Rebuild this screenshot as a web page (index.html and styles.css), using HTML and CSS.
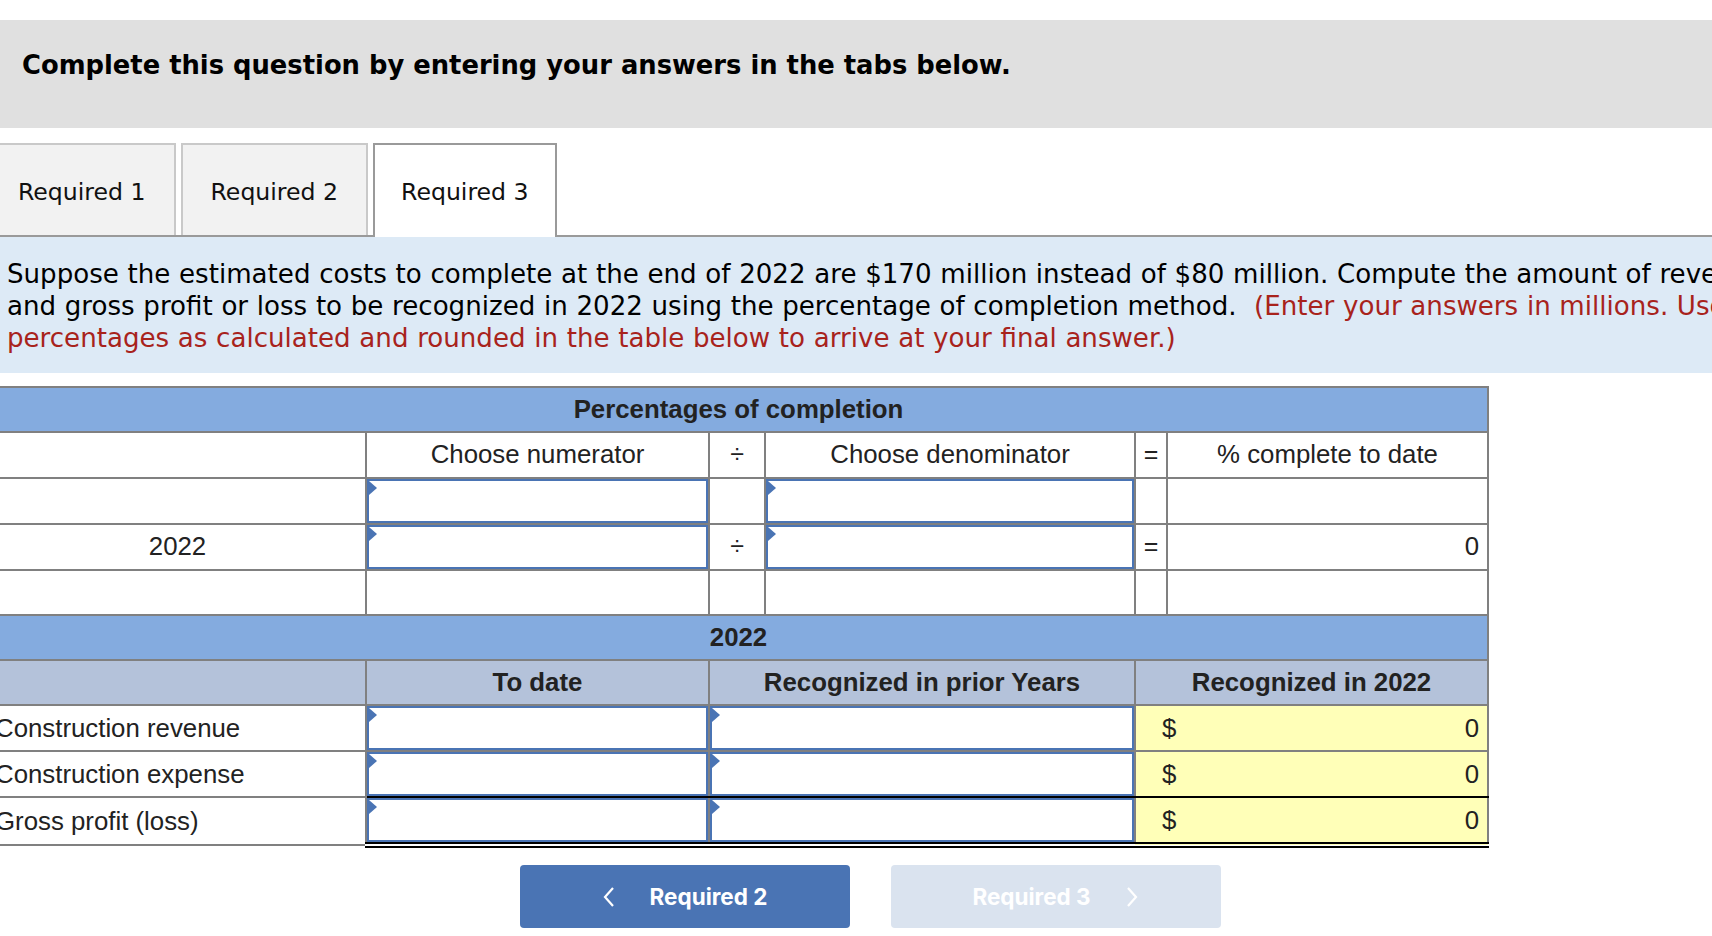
FILE: index.html
```html
<!DOCTYPE html>
<html>
<head>
<meta charset="utf-8">
<link rel="stylesheet" href="styles.css">
</head>
<body>
<div class="page">
  <div class="banner">Complete this question by entering your answers in the tabs below.</div>

  <div class="tabs">
    <div class="tab">Required 1</div>
    <div class="tab">Required 2</div>
    <div class="tab active">Required 3</div>
  </div>

  <div class="desc">
    Suppose the estimated costs to complete at the end of 2022 are $170 million instead of $80 million. Compute the amount of revenue<br>
    and gross profit or loss to be recognized in 2022 using the percentage of completion method. <span class="note">&nbsp;(Enter your answers in millions. Use the</span><br>
    <span class="note">percentages as calculated and rounded in the table below to arrive at your final answer.)</span>
  </div>

  <table class="grid">
    <colgroup>
      <col class="c1"><col class="c2"><col class="c3"><col class="c4"><col class="c5"><col class="c6">
    </colgroup>
    <tr class="head">
      <td colspan="6">Percentages of completion</td>
    </tr>
    <tr>
      <td></td>
      <td class="center">Choose numerator</td>
      <td class="center op">÷</td>
      <td class="center">Choose denominator</td>
      <td class="center op">=</td>
      <td class="center">% complete to date</td>
    </tr>
    <tr>
      <td></td>
      <td class="inp"><div class="field"></div></td>
      <td></td>
      <td class="inp"><div class="field"></div></td>
      <td></td>
      <td></td>
    </tr>
    <tr>
      <td class="center">2022</td>
      <td class="inp"><div class="field"></div></td>
      <td class="center op">÷</td>
      <td class="inp"><div class="field"></div></td>
      <td class="center op">=</td>
      <td class="num">0</td>
    </tr>
    <tr>
      <td></td><td></td><td></td><td></td><td></td><td></td>
    </tr>
    <tr class="head">
      <td colspan="6">2022</td>
    </tr>
    <tr class="sub">
      <td></td>
      <td>To date</td>
      <td colspan="2">Recognized in prior Years</td>
      <td colspan="2">Recognized in 2022</td>
    </tr>
    <tr>
      <td class="label">Construction revenue</td>
      <td class="inp"><div class="field"></div></td>
      <td class="inp" colspan="2"><div class="field"></div></td>
      <td class="yel" colspan="2"><div class="money"><span>$</span><span>0</span></div></td>
    </tr>
    <tr class="sumrow">
      <td class="label">Construction expense</td>
      <td class="inp"><div class="field"></div></td>
      <td class="inp" colspan="2"><div class="field"></div></td>
      <td class="yel" colspan="2"><div class="money"><span>$</span><span>0</span></div></td>
    </tr>
    <tr class="total">
      <td class="label">Gross profit (loss)</td>
      <td class="inp"><div class="field"></div></td>
      <td class="inp" colspan="2"><div class="field"></div></td>
      <td class="yel" colspan="2"><div class="money"><span>$</span><span>0</span></div></td>
    </tr>
  </table>

  <div class="nav">
    <button class="btn prev">
      <svg width="14" height="20" viewBox="0 0 14 20"><polyline points="11,1 3,10 11,19" fill="none" stroke="#fff" stroke-width="2.2"/></svg>
      <span>Required 2</span>
    </button>
    <button class="btn next">
      <span>Required 3</span>
      <svg width="14" height="20" viewBox="0 0 14 20"><polyline points="3,1 11,10 3,19" fill="none" stroke="#fff" stroke-width="2.2"/></svg>
    </button>
  </div>
</div>
</body>
</html>
```

FILE: styles.css
```css
html, body {
  margin: 0;
  padding: 0;
  background: #fff;
}
body {
  width: 1712px;
  height: 936px;
  overflow: hidden;
}
.page {
  margin-left: -12px;
  width: 1764px;
  padding-top: 20px;
}
.banner {
  background: #e0e0e0;
  height: 108px;
  box-sizing: border-box;
  padding: 29px 0 0 34px;
  font-family: "DejaVu Sans", Verdana, sans-serif;
  font-weight: bold;
  font-size: 25.8px;
  line-height: 32px;
  color: #000;
  width: 1800px;
}
.tabs {
  margin-top: 15px;
  display: flex;
  gap: 5px;
  border-bottom: 2px solid #9a9a9a;
  height: 92px;
}
.tab {
  box-sizing: border-box;
  height: 92px;
  padding: 3px 28px 0;
  display: flex;
  align-items: center;
  background: #f2f2f2;
  border: 2px solid #c9c9c9;
  border-bottom: none;
  font-family: "DejaVu Sans", Verdana, sans-serif;
  font-size: 23.6px;
  color: #111;
}
.tab.active {
  background: #fff;
  border-color: #9a9a9a;
  height: 94px;
  margin-bottom: -2px;
  padding: 1px 26px 0;
}
.desc {
  background: #ddeaf6;
  padding: 21px 0 19px 19px;
  font-family: "DejaVu Sans", Verdana, sans-serif;
  font-size: 26.1px;
  word-spacing: 0.4px;
  line-height: 32px;
  color: #000;
  white-space: nowrap;
  width: 1800px;
}
.note {
  color: #a8231c;
}
.grid {
  margin-top: 13px;
  border-collapse: collapse;
  table-layout: fixed;
  width: 1499px;
  font-family: "Liberation Sans", Arial, sans-serif;
  font-size: 25.8px;
  color: #222;
}
.c1 { width: 377px; }
.c2 { width: 343px; }
.c3 { width: 56px; }
.c4 { width: 370px; }
.c5 { width: 32px; }
.c6 { width: 321px; }
.grid td {
  border: 2px solid #808080;
  height: 45.3px;
  padding: 0;
  vertical-align: middle;
  box-sizing: border-box;
}
.grid .head td {
  background: #84abdf;
  font-weight: bold;
  text-align: center;
}
.grid .sub td {
  background: #b4c2da;
  font-weight: bold;
  text-align: center;
}
.center { text-align: center; }
.op { font-size: 25px; }
.num {
  text-align: right;
  padding-right: 8px !important;
}
.label {
  padding-left: 5px !important;
}
.inp {
  padding: 0;
}
.field {
  position: relative;
  box-sizing: border-box;
  height: 44px;
  border: 2px solid #4a74b4;
  background: #fff;
}
.field::before {
  content: "";
  position: absolute;
  left: 0;
  top: 0;
  border-left: 8px solid #4a74b4;
  border-top: 7px solid transparent;
  border-bottom: 7px solid transparent;
}
.yel {
  background: #ffffb8;
}
.money {
  display: flex;
  justify-content: space-between;
  padding: 0 8px 0 26px;
}
.sumrow .inp, .sumrow .yel {
  border-bottom: 2px solid #000;
}
.total .inp, .total .yel {
  border-bottom: 6px double #000;
}
.nav {
  margin-top: 17px;
  display: flex;
  justify-content: center;
  gap: 41px;
  width: 1764px;
}
.btn {
  width: 330px;
  height: 63px;
  border: none;
  border-radius: 4px;
  display: flex;
  align-items: center;
  justify-content: center;
  gap: 34px;
  font-family: Inter, Roboto, sans-serif;
  font-weight: 700;
  font-size: 22.5px;
  color: #fff;
  padding: 0;
}
.prev {
  background: #4a74b4;
}
.next {
  background: #dae3ef;
}
```
